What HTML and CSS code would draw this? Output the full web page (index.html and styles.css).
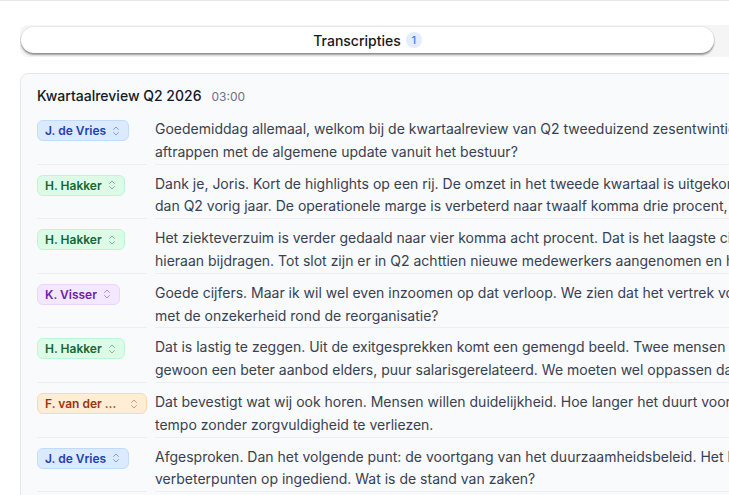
FILE: index.html
```html
<!DOCTYPE html>
<html lang="nl">
<head>
<meta charset="utf-8">
<title>Transcripties</title>
<link rel="stylesheet" href="styles.css">
</head>
<body>
<div class="page">
  <div class="tabs">
    <button class="tab tab-active">Transcripties <span class="count">1</span></button>
    <button class="tab">Notities</button>
  </div>

  <section class="card">
    <header class="card-head">
      <h2 class="card-title">Kwartaalreview Q2 2026</h2>
      <span class="duration">03:00</span>
    </header>

    <div class="segments">
      <div class="speaker"><span class="badge badge-blue"><span class="badge-name">J. de Vries</span><svg class="chev" viewBox="0 0 24 24"><path d="m7 15 5 5 5-5"/><path d="m7 9 5-5 5 5"/></svg></span></div>
      <p class="text">Goedemiddag allemaal, welkom bij de kwartaalreview van Q2 tweeduizend zesentwintig. Hakker, wil jij<br>aftrappen met de algemene update vanuit het bestuur?</p>

      <div class="speaker"><span class="badge badge-green"><span class="badge-name">H. Hakker</span><svg class="chev" viewBox="0 0 24 24"><path d="m7 15 5 5 5-5"/><path d="m7 9 5-5 5 5"/></svg></span></div>
      <p class="text">Dank je, Joris. Kort de highlights op een rij. De omzet in het tweede kwartaal is uitgekomen op acht procent hoger<br>dan Q2 vorig jaar. De operationele marge is verbeterd naar twaalf komma drie procent, een mooie stap.</p>

      <div class="speaker"><span class="badge badge-green"><span class="badge-name">H. Hakker</span><svg class="chev" viewBox="0 0 24 24"><path d="m7 15 5 5 5-5"/><path d="m7 9 5-5 5 5"/></svg></span></div>
      <p class="text">Het ziekteverzuim is verder gedaald naar vier komma acht procent. Dat is het laagste cijfer in twee jaar, en we zien<br>hieraan bijdragen. Tot slot zijn er in Q2 achttien nieuwe medewerkers aangenomen en helaas twaalf vertrokken.</p>

      <div class="speaker"><span class="badge badge-purple"><span class="badge-name">K. Visser</span><svg class="chev" viewBox="0 0 24 24"><path d="m7 15 5 5 5-5"/><path d="m7 9 5-5 5 5"/></svg></span></div>
      <p class="text">Goede cijfers. Maar ik wil wel even inzoomen op dat verloop. We zien dat het vertrek vooral zit bij de afdelingen<br>met de onzekerheid rond de reorganisatie?</p>

      <div class="speaker"><span class="badge badge-green"><span class="badge-name">H. Hakker</span><svg class="chev" viewBox="0 0 24 24"><path d="m7 15 5 5 5-5"/><path d="m7 9 5-5 5 5"/></svg></span></div>
      <p class="text">Dat is lastig te zeggen. Uit de exitgesprekken komt een gemengd beeld. Twee mensen noemden de onzekerheid, de rest had<br>gewoon een beter aanbod elders, puur salarisgerelateerd. We moeten wel oppassen dat dit niet verder oploopt.</p>

      <div class="speaker"><span class="badge badge-orange"><span class="badge-name">F. van der Meer</span><svg class="chev" viewBox="0 0 24 24"><path d="m7 15 5 5 5-5"/><path d="m7 9 5-5 5 5"/></svg></span></div>
      <p class="text">Dat bevestigt wat wij ook horen. Mensen willen duidelijkheid. Hoe langer het duurt voordat we besluiten, hoe meer we<br>tempo zonder zorgvuldigheid te verliezen.</p>

      <div class="speaker"><span class="badge badge-blue"><span class="badge-name">J. de Vries</span><svg class="chev" viewBox="0 0 24 24"><path d="m7 15 5 5 5-5"/><path d="m7 9 5-5 5 5"/></svg></span></div>
      <p class="text">Afgesproken. Dan het volgende punt: de voortgang van het duurzaamheidsbeleid. Het bestuur heeft vorige maand<br>verbeterpunten op ingediend. Wat is de stand van zaken?</p>

      <div class="speaker"><span class="badge badge-purple"><span class="badge-name">K. Visser</span><svg class="chev" viewBox="0 0 24 24"><path d="m7 15 5 5 5-5"/><path d="m7 9 5-5 5 5"/></svg></span></div>
      <p class="text">We liggen op schema. De eerste maatregelen zijn in gang gezet en de rapportage volgt na de zomer.<br>Daarna bespreken we de vervolgstappen.</p>
    </div>
  </section>
</div>
</body>
</html>
```

FILE: styles.css
```css
html, body {
  margin: 0;
  padding: 0;
  overflow: hidden;
  background: #ffffff;
}

body {
  font-family: Inter, "Noto Sans", sans-serif;
  color: #111827;
  border-top: 1px solid #e5e7eb;
}

.page {
  width: 1400px;
  padding: 24px 0 0 20px;
  box-sizing: border-box;
}

.tabs {
  display: flex;
  background: #f5f5f5;
  padding: 2px 0 4px 1px;
  border-radius: 8px 0 0 8px;
}

.tab {
  flex: 0 0 693px;
  height: 26px;
  border: none;
  background: transparent;
  font-family: inherit;
  font-size: 14px;
  font-weight: 500;
  color: #18181b;
  display: flex;
  align-items: center;
  justify-content: center;
  gap: 5px;
  padding: 0;
  border-radius: 13px;
}

.tab-active {
  background: #ffffff;
  box-shadow: 0 2px 2px rgba(0, 0, 0, 0.38), 0 0 0 1px rgba(0, 0, 0, 0.05);
}

.count {
  display: inline-flex;
  align-items: center;
  justify-content: center;
  width: 16px;
  height: 16px;
  border-radius: 50%;
  background: #e3edfd;
  color: #3b82f6;
  font-size: 11px;
  font-weight: 500;
}

.card {
  margin-top: 16px;
  border: 1px solid #e5e7eb;
  border-radius: 8px;
  background: #f9fafb;
  padding: 12px 16px 0 16px;
}

.card-head {
  display: flex;
  align-items: baseline;
  gap: 10px;
  margin-bottom: 4px;
}

.card-title {
  margin: 0;
  font-size: 14px;
  font-weight: 500;
  line-height: 20px;
  color: #111827;
}

.duration {
  font-size: 12px;
  color: #6b7280;
}

.segments {
  display: grid;
  grid-template-columns: 110px 1fr;
  column-gap: 8px;
}

.speaker,
.text {
  border-bottom: 1px solid #eceef1;
  padding-top: 8.1px;
}

.speaker {
  min-width: 0;
}

.text {
  margin: 0;
  font-size: 14px;
  line-height: 22.75px;
  color: #374151;
  white-space: nowrap;
}

.badge {
  display: inline-flex;
  align-items: center;
  gap: 4px;
  max-width: 100%;
  box-sizing: border-box;
  height: 21px;
  margin-top: 2px;
  padding: 0 6px 0 7px;
  border: 1px solid;
  border-radius: 6px;
  font-size: 12px;
  font-weight: 600;
}

.badge-name {
  flex: 1 1 auto;
  min-width: 0;
  overflow: hidden;
  white-space: nowrap;
  text-overflow: ellipsis;
}

.chev {
  flex: 0 0 12px;
  width: 12px;
  height: 12px;
  fill: none;
  stroke: currentColor;
  stroke-width: 2;
  stroke-linecap: round;
  stroke-linejoin: round;
  opacity: 0.45;
}

.badge-blue {
  background: #dbeafe;
  border-color: #bfdbfe;
  color: #1e40af;
}

.badge-green {
  background: #dcfce7;
  border-color: #bbf7d0;
  color: #166534;
}

.badge-purple {
  background: #f3e8ff;
  border-color: #e9d5ff;
  color: #6b21a8;
}

.badge-orange {
  background: #ffedd5;
  border-color: #fed7aa;
  color: #9a3412;
}
```
